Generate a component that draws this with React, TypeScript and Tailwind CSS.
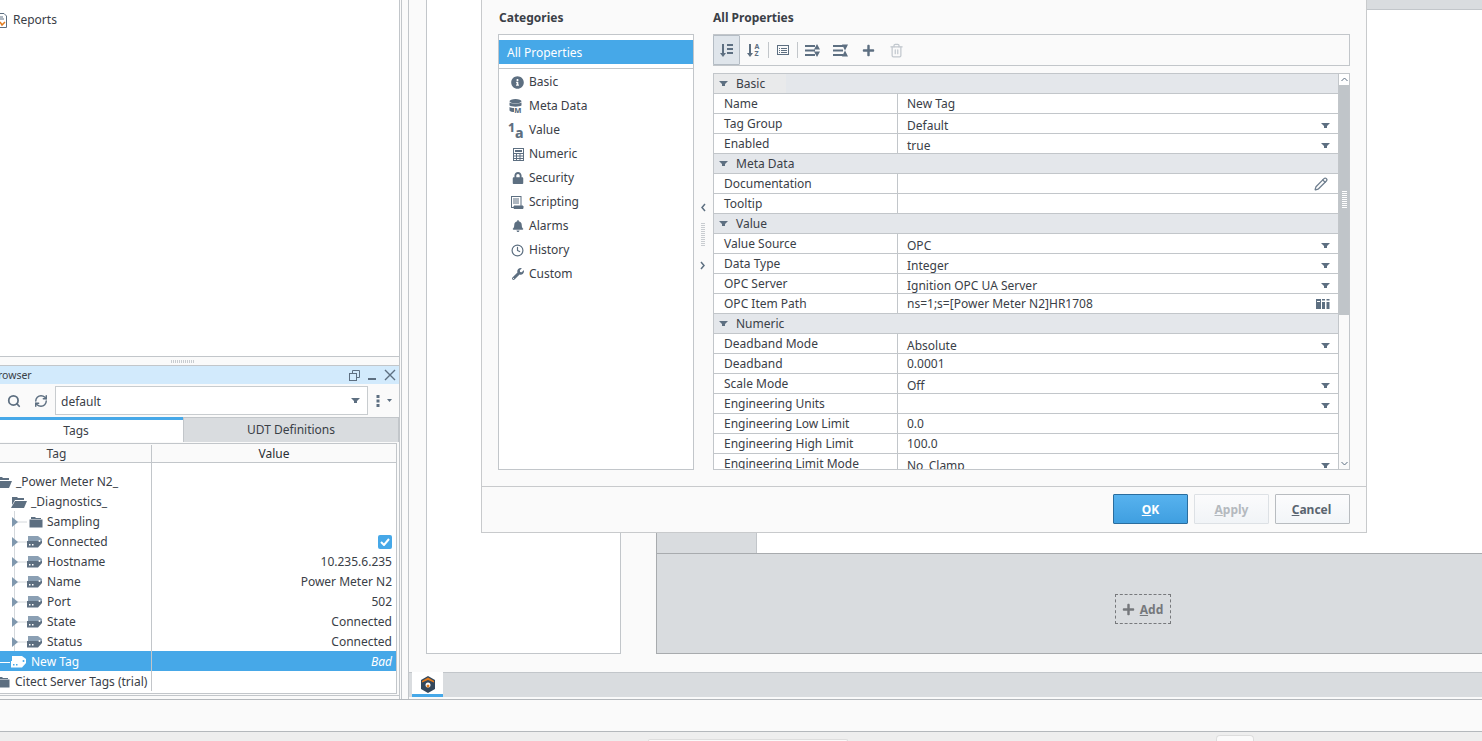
import { Clock, Pencil, RefreshCw, Search, Trash2 } from "lucide-react";
import { FaBell, FaInfoCircle, FaLock, FaPlus, FaWrench } from "react-icons/fa";

const slate = "#5d6f81";

const propRows = [
	{ head: true, label: "Basic" },
	{ label: "Name", value: "New Tag" },
	{ label: "Tag Group", value: "Default", dd: true },
	{ label: "Enabled", value: "true", dd: true },
	{ head: true, label: "Meta Data" },
	{ label: "Documentation", value: "", icon: "pencil" },
	{ label: "Tooltip", value: "" },
	{ head: true, label: "Value" },
	{ label: "Value Source", value: "OPC", dd: true },
	{ label: "Data Type", value: "Integer", dd: true },
	{ label: "OPC Server", value: "Ignition OPC UA Server", dd: true },
	{ label: "OPC Item Path", value: "ns=1;s=[Power Meter N2]HR1708", icon: "browse" },
	{ head: true, label: "Numeric" },
	{ label: "Deadband Mode", value: "Absolute", dd: true },
	{ label: "Deadband", value: "0.0001" },
	{ label: "Scale Mode", value: "Off", dd: true },
	{ label: "Engineering Units", value: "", dd: true },
	{ label: "Engineering Low Limit", value: "0.0" },
	{ label: "Engineering High Limit", value: "100.0" },
	{ label: "Engineering Limit Mode", value: "No_Clamp", dd: true },
];

const tagRows = [
	{ name: "Sampling", value: "", folder: true },
	{ name: "Connected", value: "", check: true },
	{ name: "Hostname", value: "10.235.6.235" },
	{ name: "Name", value: "Power Meter N2" },
	{ name: "Port", value: "502" },
	{ name: "State", value: "Connected" },
	{ name: "Status", value: "Connected" },
];

function Caret({ className = "" }: { className?: string }) {
	return (
		<svg width="9" height="5" viewBox="0 0 9 5" className={`shrink-0 ${className}`}>
			<path d="M0 0h9L6 3v2H3V3z" fill={slate} />
		</svg>
	);
}

function FolderClosed() {
	return (
		<svg width="14" height="12" viewBox="0 0 14 12">
			<path d="M2 1h4l1 1h5v1H2z" fill={slate} />
			<rect x="0.500" y="3.500" width="13" height="8" fill={slate} />
		</svg>
	);
}

function FolderOpen() {
	return (
		<svg width="16" height="12" viewBox="0 0 16 12">
			<path d="M1 1h5l1 1h6v2H4L1 9z" fill={slate} />
			<path d="M4 5h12l-3 7H0z" fill={slate} />
		</svg>
	);
}

function TagIcon({ light = false }: { light?: boolean }) {
	return (
		<svg width="16" height="12" viewBox="0 0 16 12">
			<path d="M1 0h10l4 3v2H1z" fill={light ? "#ffffff" : "#8ba0b4"} />
			<path d="M0 5h15v2l-4 4.500H0z" fill={light ? "#ffffff" : slate} />
			<rect x="2" y="8" width="1.500" height="1.500" fill={light ? "#46a8e8" : "#ffffff"} />
			<rect x="5" y="8" width="1.500" height="1.500" fill={light ? "#46a8e8" : "#ffffff"} />
			<circle cx="12.500" cy="5" r="1" fill={light ? "#46a8e8" : "#ffffff"} />
		</svg>
	);
}

function Gutter() {
	return (
		<svg width="27" height="20" viewBox="0 0 27 20" className="shrink-0">
			<path d="M14.500 0v20M14.500 11H27" stroke="#d4d8dc" fill="none" />
			<path d="M12 6l6 5-6 5z" fill="#8098ae" />
		</svg>
	);
}

function SortNumIcon() {
	return (
		<svg width="14" height="14" viewBox="0 0 14 14" fill={slate}>
			<path d="M2 1h2v9h2l-3 4-3-4h2z" />
			<path d="M7 1h6v2H7zM7 5h6v2H7zM7 9h6v2H7z" />
		</svg>
	);
}

function SortAzIcon() {
	return (
		<svg width="14" height="14" viewBox="0 0 14 14" fill={slate}>
			<path d="M2 1h2v9h2l-3 4-3-4h2z" />
			<text x="7.500" y="6" fontSize="7" fontWeight="700" fontFamily="Noto Sans">A</text>
			<text x="7.500" y="13" fontSize="7" fontWeight="700" fontFamily="Noto Sans">Z</text>
		</svg>
	);
}

function DetailIcon() {
	return (
		<svg width="12" height="10" viewBox="0 0 12 10" fill="none" stroke={slate}>
			<rect x="0.500" y="0.500" width="11" height="9" />
			<path d="M2 3.500h1M4 3.500h6M2 5.500h1M4 5.500h6M2 7.500h1M4 7.500h6" />
		</svg>
	);
}

function ExpandIcon() {
	return (
		<svg width="15" height="13" viewBox="0 0 15 13" fill={slate}>
			<path d="M0 1h10v2H0zM0 5.500h10v2H0zM0 10h10v2H0z" />
			<path d="M12 0l3 5.500H9zM12 13l3-5.500H9z" />
		</svg>
	);
}

function CollapseIcon() {
	return (
		<svg width="15" height="13" viewBox="0 0 15 13" fill={slate}>
			<path d="M0 1h10v2H0zM0 5.500h10v2H0zM0 10h10v2H0z" />
			<path d="M12 6.500L9 .5h6zM12 6.500l3 6H9z" />
		</svg>
	);
}

function MetaIcon() {
	return (
		<svg width="15" height="14" viewBox="0 0 15 14" fill={slate} className="overflow-visible">
			<ellipse cx="6.500" cy="2.200" rx="6" ry="2.200" />
			<path d="M.5 3.500c2 1.500 10 1.500 12 0V6.500c-2 1.500-10 1.500-12 0zM.5 8c1 .8 3 1 4.500 1v4c-2 0-3.500-.5-4.500-1.500z" />
			<text x="5.300" y="13.500" fontSize="7.500" fontWeight="800" fontFamily="Noto Sans">M</text>
		</svg>
	);
}

function ValueIcon() {
	return (
		<svg width="17" height="15" viewBox="0 0 17 15" fill={slate} className="overflow-visible">
			<text x="1" y="9" fontSize="12" fontWeight="800" fontFamily="Noto Sans">1</text>
			<text x="8" y="14.500" fontSize="14" fontWeight="800" fontFamily="Noto Sans">a</text>
		</svg>
	);
}

function CalcIcon() {
	return (
		<svg width="11" height="13" viewBox="0 0 11 13" fill="none" stroke={slate}>
			<rect x="0.500" y="0.500" width="10" height="12" />
			<path d="M2 3h7" strokeWidth="2" />
			<path d="M0.500 5.500h10M0.500 8h10M0.500 10.500h10M3.500 5v8M7 5v8" />
		</svg>
	);
}

function ScriptIcon() {
	return (
		<svg width="13" height="13" viewBox="0 0 13 13" fill="none" stroke={slate}>
			<rect x="0.500" y="0.500" width="9.500" height="11" />
			<path d="M2 3h6M2 5h6M2 7h6" />
			<path d="M3 10h9v2.500H3z" fill={slate} />
		</svg>
	);
}

function BrowseIcon() {
	return (
		<svg width="14" height="10" viewBox="0 0 14 10" fill={slate}>
			<path d="M0 0h5v10H0z" />
			<path d="M1 2h3v1H1z" fill="#ffffff" />
			<path d="M6 0h3v1.500H6zM6 3h3v7H6zM10.500 0h3v1.500h-3zM10.500 3h3v7h-3z" />
		</svg>
	);
}

function Logo() {
	return (
		<svg width="16" height="17" viewBox="0 0 16 17">
			<path d="M8 0l7 4v9l-7 4-7-4V4z" fill="#33475b" />
			<path d="M2 5l6-3.500L14 5v1.500L8 4 2 6.500z" fill="#e07b1f" />
			<circle cx="8" cy="9" r="2.500" fill="#ffffff" />
			<circle cx="8" cy="10" r="1.500" fill="#e07b1f" />
		</svg>
	);
}

function CategoryRow({ icon, label }: { icon: React.ReactNode; label: string }) {
	return (
		<div className="flex h-[24px] items-center">
			<div className="flex w-[30px] shrink-0 items-center justify-end pr-[5px]">{icon}</div>
			<span>{label}</span>
		</div>
	);
}

function PropertyRow({ row, first }: { row: (typeof propRows)[number]; first: boolean }) {
	if (row.head) {
		return (
			<div className="flex h-[20px] shrink-0 border-b border-[#c2c6ca] bg-[#e4e7eb]">
				<div className={`flex w-[72px] items-center ${first ? "bg-[#e9eaeb]" : ""}`}>
					<Caret className="ml-[5px] mr-[8px]" />
					<span>{row.label}</span>
				</div>
			</div>
		);
	}
	return (
		<div className="flex h-[20px] shrink-0 border-b border-[#c2c6ca] bg-white">
			<div className="flex w-[184px] shrink-0 items-center border-r border-[#c2c6ca] pl-[10px]">{row.label}</div>
			<div className="flex flex-1 items-center justify-between pl-[9px] pr-[8px]">
				<span className={row.dd ? "pt-[5px]" : ""}>{row.value}</span>
				{row.dd && <Caret className="mt-[3px]" />}
				{row.icon === "pencil" && <Pencil size={14} color="#6f7f8f" strokeWidth={2.2} className="mr-[2px]" />}
				{row.icon === "browse" && <BrowseIcon />}
			</div>
		</div>
	);
}

function TagRow({ row }: { row: (typeof tagRows)[number] }) {
	return (
		<div className="flex h-[20px] items-center">
			<div className="flex h-full w-[152px] shrink-0 items-center border-r border-[#c2c6ca]">
				<Gutter />
				{row.folder ? (
					<div className="mt-[2px] flex w-[20px] shrink-0 justify-start pl-[2px]"><FolderClosed /></div>
				) : (
					<div className="mt-[2px] flex w-[20px] shrink-0"><TagIcon /></div>
				)}
				<span className="mt-[2px]">{row.name}</span>
			</div>
			<div className="mt-[2px] flex flex-1 justify-end pr-[4px]">
				{row.check ? (
					<div className="flex h-[14px] w-[14px] items-center justify-center rounded-[2px] bg-[#46a8e8]">
						<svg width="10" height="8" viewBox="0 0 10 8">
							<path d="M1 4l3 3 5-6" fill="none" stroke="#ffffff" strokeWidth="2" />
						</svg>
					</div>
				) : (
					row.value
				)}
			</div>
		</div>
	);
}

function PropertiesDialog() {
	return (
		<div className="absolute left-[481px] top-0 flex h-[533px] w-[886px] flex-col border-x border-b border-[#c8cacc] bg-[#fafafa] text-[12px] text-[#3a4047]">
			<div className="flex h-[486px] shrink-0 pl-[16px]">
				{/* categories */}
				<div className="flex w-[196px] shrink-0 flex-col">
					<div className="flex h-[34px] shrink-0 items-center pl-[1px] pt-[1px] font-bold">Categories</div>
					<div className="flex h-[436px] flex-col border border-[#c2c6ca] bg-white">
						<div className="mt-[5px] flex h-[24px] shrink-0 items-center bg-[#46a8e8] pl-[8px] pt-[2px] text-white">All Properties</div>
						<div className="mt-[4px] mb-[1px] h-px shrink-0 bg-[#c2c6ca]" />
						<CategoryRow icon={<FaInfoCircle size={13} color={slate} />} label="Basic" />
						<CategoryRow icon={<MetaIcon />} label="Meta Data" />
						<CategoryRow icon={<ValueIcon />} label="Value" />
						<CategoryRow icon={<CalcIcon />} label="Numeric" />
						<CategoryRow icon={<FaLock size={12} color={slate} />} label="Security" />
						<CategoryRow icon={<ScriptIcon />} label="Scripting" />
						<CategoryRow icon={<FaBell size={12} color={slate} />} label="Alarms" />
						<CategoryRow icon={<Clock size={13} color={slate} strokeWidth={2.2} />} label="History" />
						<CategoryRow icon={<FaWrench size={12} color={slate} />} label="Custom" />
					</div>
				</div>
				{/* splitter */}
				<div className="flex w-[19px] shrink-0 flex-col items-center pr-[1px] pt-[203px]">
					<svg width="6" height="9" viewBox="0 0 6 9"><path d="M5 1L2 4.500 5 8" fill="none" stroke={slate} strokeWidth="1.500" /></svg>
					<div className="mt-[11px] h-[24px] w-[4px] bg-[repeating-linear-gradient(to_bottom,#c8ccd0_0,#c8ccd0_1px,transparent_1px,transparent_2px)]" />
					<svg width="6" height="9" viewBox="0 0 6 9" className="mt-[14px]"><path d="M1 1l3 3.500L1 8" fill="none" stroke={slate} strokeWidth="1.500" /></svg>
				</div>
				{/* properties */}
				<div className="flex w-[637px] shrink-0 flex-col">
					<div className="flex h-[34px] shrink-0 items-center pt-[1px] font-bold">All Properties</div>
					<div className="flex h-[32px] shrink-0 items-center border border-[#c2c6ca]">
						<div className="-ml-px flex h-[30px] w-[27px] items-center justify-center rounded-[1px] border border-[#b4bcc4] bg-[#dfe5eb]"><SortNumIcon /></div>
						<div className="flex w-[28px] justify-center"><SortAzIcon /></div>
						<div className="h-[16px] w-px bg-[#c2c6ca]" />
						<div className="flex w-[28px] justify-center"><DetailIcon /></div>
						<div className="h-[16px] w-px bg-[#c2c6ca]" />
						<div className="flex w-[28px] justify-center"><ExpandIcon /></div>
						<div className="flex w-[28px] justify-center"><CollapseIcon /></div>
						<div className="flex w-[28px] justify-center"><FaPlus size={13} color={slate} /></div>
						<div className="flex w-[28px] justify-center"><Trash2 size={15} color="#c2c8ce" /></div>
					</div>
					<div className="mt-[7px] flex h-[397px] shrink-0 border border-[#c2c6ca]">
						<div className="flex flex-1 flex-col overflow-hidden">
							{propRows.map((row, i) => (
								<PropertyRow key={row.label} row={row} first={i === 0} />
							))}
						</div>
						<div className="flex w-[11px] shrink-0 flex-col border-l border-[#c2c6ca] bg-[#fafafa]">
							<div className="flex h-[11px] shrink-0 items-center justify-center bg-white">
								<svg width="7" height="5" viewBox="0 0 7 5"><path d="M.5 4L3.500 1l3 3" fill="none" stroke={slate} /></svg>
							</div>
							<div className="flex h-[230px] shrink-0 items-center justify-center bg-[#c0c5c9]">
								<div className="h-[18px] w-[5px] bg-[repeating-linear-gradient(to_bottom,#ffffff_0,#ffffff_1px,transparent_1px,transparent_2px)]" />
							</div>
							<div className="flex-1" />
							<div className="flex h-[12px] shrink-0 items-center justify-center">
								<svg width="7" height="5" viewBox="0 0 7 5"><path d="M.5 1l3 3 3-3" fill="none" stroke={slate} /></svg>
							</div>
						</div>
					</div>
				</div>
			</div>
			{/* footer */}
			<div className="flex flex-1 items-start justify-end gap-[6px] border-t border-[#c8cacc] pr-[16px] pt-[7px] font-bold">
				<div className="flex h-[30px] w-[75px] items-center justify-center rounded-[1px] border border-[#2a6d9e] bg-gradient-to-b from-[#57b2ee] to-[#3f9fe0] pt-[2px] text-white"><span><u>O</u>K</span></div>
				<div className="flex h-[30px] w-[75px] items-center justify-center rounded-[1px] border border-[#dde1e5] bg-gradient-to-b from-[#fbfbfc] to-[#f1f4f7] pt-[2px] text-[#b4b9be]"><span><u>A</u>pply</span></div>
				<div className="flex h-[30px] w-[75px] items-center justify-center rounded-[1px] border border-[#b8bcc0] bg-gradient-to-b from-[#fcfcfd] to-[#f2f5f8] pt-[2px] pr-[2px] text-[#5a6570]"><span><u>C</u>ancel</span></div>
			</div>
		</div>
	);
}

export default function App() {
	return (
		<div className="relative flex h-[741px] w-[1482px] flex-col overflow-hidden whitespace-nowrap bg-[#fafafa] font-['Noto_Sans',sans-serif] text-[12px] text-[#3a4047]">
			<div className="flex h-[699px] shrink-0">
				{/* left column */}
				<div className="flex w-[400px] shrink-0 flex-col border-r border-[#c2c6ca]">
					<div className="h-[357px] shrink-0 border-b border-[#c2c6ca] bg-white">
						<div className="-mt-[16px] flex h-[20px] items-center pl-[13px]">Named Queries</div>
						<div className="mt-[6px] flex h-[20px] items-center">
							<svg width="7" height="15" viewBox="0 0 7 15" className="mr-[6px]">
								<path d="M-3 .5h7l2.500 2.500v11.500H-3z" fill="#ffffff" stroke={slate} />
								<path d="M0 4h3M0 6h4" stroke={slate} />
								<path d="M0 9l2 3 3-3" fill="none" stroke="#e07b1f" strokeWidth="1.500" />
							</svg>
							Reports
						</div>
					</div>
					<div className="flex h-[8px] shrink-0 justify-center pt-[3px]">
						<div className="ml-[-34px] h-[3px] w-[24px] bg-[repeating-linear-gradient(to_right,#c8ccd0_0,#c8ccd0_1px,transparent_1px,transparent_2px)]" />
					</div>
					{/* tag browser */}
					<div className="flex h-[331px] shrink-0 flex-col overflow-hidden border-y border-[#c2c6ca]">
						<div className="flex h-[18px] shrink-0 items-center justify-between bg-[#d2eafc] pr-[3px] text-[10.5px]">
							<span className="-ml-[29px] pt-[2px]">Tag Browser</span>
							<div className="flex items-center">
								<svg width="11" height="11" viewBox="0 0 11 11" fill="none" stroke={slate}>
									<rect x="0.500" y="3.500" width="7" height="7" />
									<path d="M3.500 3V.5h7v7H8" />
								</svg>
								<div className="ml-[8px] mt-[8px] h-[2px] w-[8px] bg-[#5d6f81]" />
								<svg width="12" height="12" viewBox="0 0 12 12" className="ml-[8px]">
									<path d="M1 1l10 10M11 1L1 11" fill="none" stroke={slate} strokeWidth="1.400" />
								</svg>
							</div>
						</div>
						<div className="flex h-[33px] shrink-0 items-center">
							<div className="flex w-[55px] shrink-0 items-center gap-[13px] pl-[7px]">
								<Search size={14} color={slate} strokeWidth={3} />
								<RefreshCw size={14} color={slate} strokeWidth={2.5} />
							</div>
							<div className="flex h-[29px] w-[313px] items-center justify-between border border-[#c8cccf] bg-white pl-[5px] pr-[7px]">
								<span className="pt-[2px]">default</span>
								<Caret />
							</div>
							<div className="flex flex-1 items-center justify-center gap-[7px] pl-[1px]">
								<svg width="4" height="12" viewBox="0 0 4 12" fill={slate}>
									<path d="M0.500 0h3v3h-3zM0.500 4.500h3v3h-3zM0.500 9h3v3h-3z" />
								</svg>
								<svg width="5" height="3" viewBox="0 0 5 3"><path d="M0 0h5L2.500 3z" fill={slate} /></svg>
							</div>
						</div>
						<div className="flex h-[25px] shrink-0">
							<div className="flex w-[183px] items-center justify-center border-t-[3px] border-[#46a8e8] bg-white pr-[31px]">Tags</div>
							<div className="flex flex-1 items-center justify-center border-x border-t border-[#c2c6ca] bg-[#d9dcdf]">UDT Definitions</div>
						</div>
						<div className="mt-px mr-[2px] mb-px flex flex-1 flex-col overflow-hidden border-b border-r border-[#c2c6ca] bg-white">
							<div className="flex h-[20px] shrink-0 border-y border-[#c2c6ca] bg-[#fafafa] pt-[1px]">
								<div className="flex w-[152px] items-center justify-center border-r border-[#c2c6ca] pr-[38px]">Tag</div>
								<div className="flex flex-1 items-center justify-center text-[#2a2f34]">Value</div>
							</div>
							<div className="flex flex-1 flex-col">
								<div className="h-[8px] w-[152px] shrink-0 border-r border-[#c2c6ca]" />
								<div className="flex h-[20px] w-[152px] shrink-0 items-center border-r border-[#c2c6ca] pt-[2px]">
									<div className="-ml-[4px] mr-[4px] flex"><FolderOpen /></div>
									_Power Meter N2_
								</div>
								<div className="flex h-[20px] w-[152px] shrink-0 items-center border-r border-[#c2c6ca] pl-[11px] pt-[2px]">
									<div className="mr-[4px] flex"><FolderOpen /></div>
									_Diagnostics_
								</div>
								{tagRows.map((row) => (
									<TagRow key={row.name} row={row} />
								))}
								<div className="flex h-[20px] items-center bg-[#46a8e8] text-white">
									<div className="flex h-full w-[152px] shrink-0 items-center border-r border-[#c2c6ca] pt-[2px]">
										<div className="mr-[1px] h-px w-[10px] bg-white" />
										<div className="mr-[4px] flex"><TagIcon light /></div>
										New Tag
									</div>
									<div className="flex-1 pr-[4px] pt-[2px] text-right italic">Bad</div>
								</div>
								<div className="flex h-[20px] items-center">
									<div className="flex h-full w-[152px] shrink-0 items-center border-r border-[#c2c6ca] pt-[2px]">
										<div className="-ml-[4px] mr-[5px] flex"><FolderClosed /></div>
										Citect Server Tags (trial)
									</div>
								</div>
							</div>
						</div>
					</div>
				</div>
				<div className="ml-[1px] w-[8px] shrink-0 border-x border-[#c2c6ca]" />
				{/* designer area */}
				<div className="flex flex-1 flex-col">
					<div className="flex h-[672px] shrink-0 items-start">
						<div className="ml-[17px] h-[654px] w-[195px] shrink-0 border-x border-b border-[#c2c6ca] bg-white" />
						<div className="ml-[35px] flex h-[654px] flex-1 flex-col border-l border-[#a8abae] bg-white">
							<div className="h-[10px] shrink-0 border-b border-[#c2c6ca] bg-[#d9dcdf]" />
							<div className="flex-1" />
							<div className="h-[21px] w-[100px] shrink-0 border-r border-t border-[#c2c6ca] bg-[#d9dcdf]" />
							<div className="flex h-[101px] shrink-0 items-center justify-center border-y border-[#a8abae] bg-[#d9dcdf] pl-[146px] pt-[11px]">
								<div className="flex h-[30px] w-[56px] items-center justify-center gap-[5px] border border-dashed border-[#77797c] pt-[1px] font-bold text-[#75787c]">
									<FaPlus size={13} color="#75787c" />
									<span><u>A</u>dd</span>
								</div>
							</div>
						</div>
					</div>
					<div className="flex h-[25px] shrink-0 border-t border-[#c2c6ca] bg-[#d9dcdf]">
						<div className="ml-[3px] -mt-px flex h-[25px] w-[31px] flex-col items-center border-b-[3px] border-[#46a8e8] bg-white pt-[4px]">
							<Logo />
						</div>
					</div>
				</div>
			</div>
			<div className="h-[33px] shrink-0 border-y border-[#b4b8bc] bg-[#fafafa]" />
			<div className="flex flex-1 items-end bg-[#eeeeee]">
				<div className="ml-[648px] h-[2px] w-[200px] rounded-t-[4px] border-x border-t border-[#dddddd] bg-[#fafafa]" />
				<div className="ml-[368px] h-[6px] w-[38px] rounded-t-[4px] border-x border-t border-[#dddddd] bg-[#fafafa]" />
			</div>
			<PropertiesDialog />
		</div>
	);
}
